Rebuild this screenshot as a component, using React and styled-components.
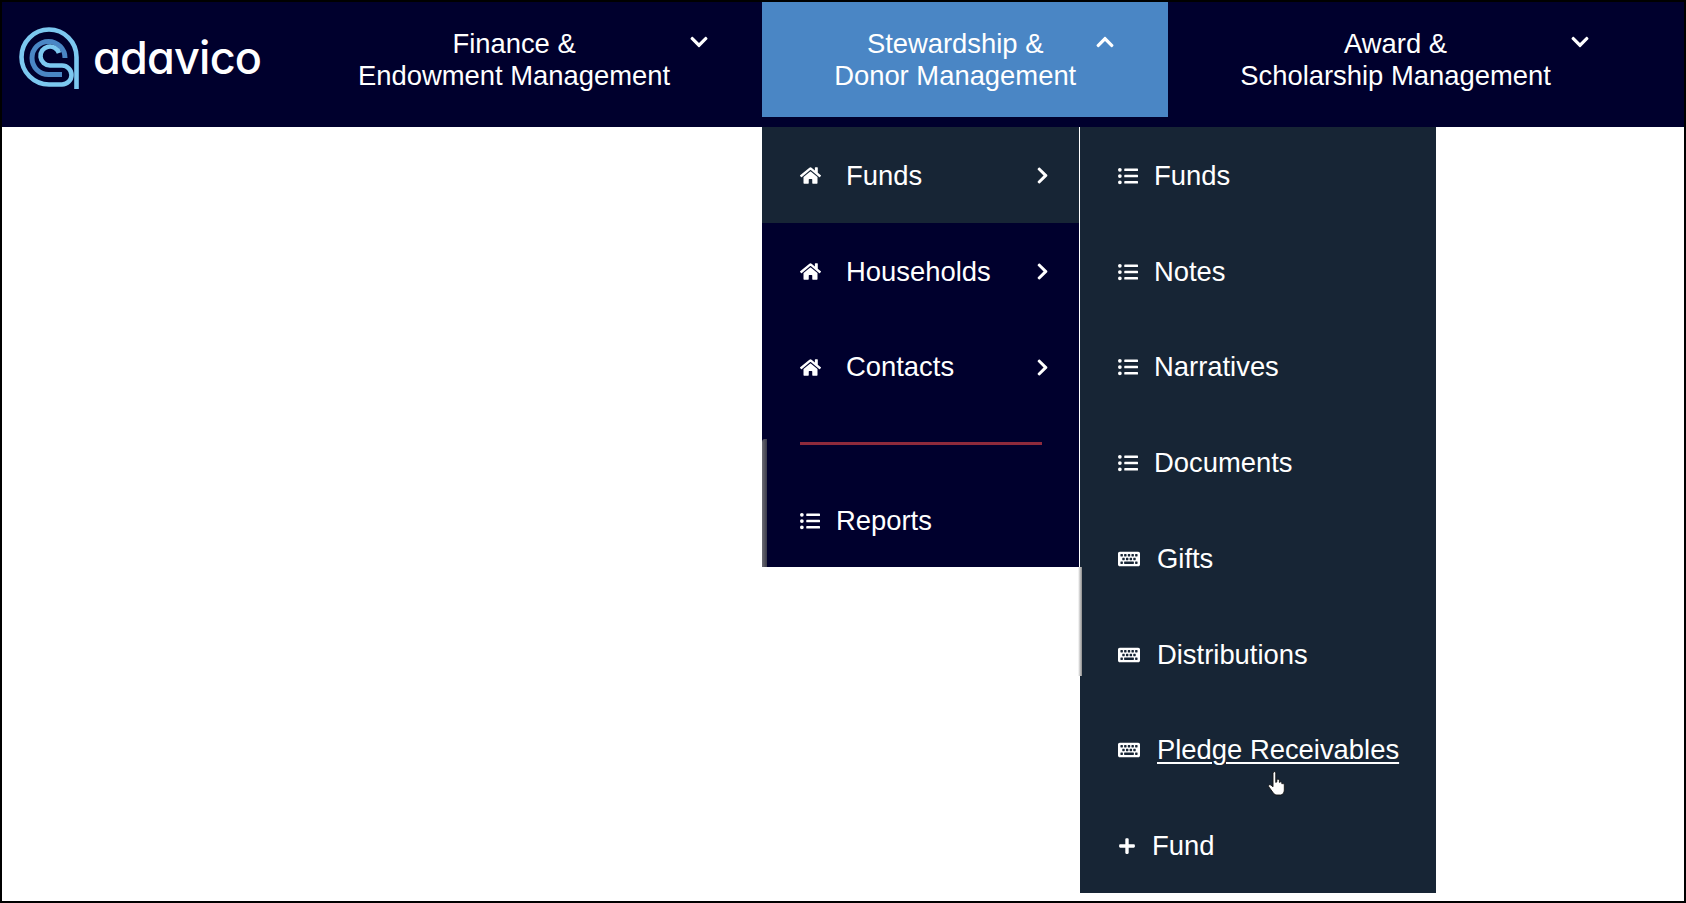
import React from "react";
import styled, { createGlobalStyle } from "styled-components";
import { FaHome, FaListUl, FaKeyboard, FaPlus, FaChevronRight, FaChevronDown, FaChevronUp } from "react-icons/fa";

const Global = createGlobalStyle`
  html, body { margin: 0; padding: 0; background: #fff; }
  * { box-sizing: border-box; }
`;

const Page = styled.div`
  position: relative;
  width: 1686px;
  height: 903px;
  border: 2px solid #000;
  background: #fff;
  font-family: "Liberation Sans", Arial, sans-serif;
  color: #fff;
  overflow: hidden;
`;

const Header = styled.header`
  display: flex;
  align-items: flex-start;
  height: 125px;
  background: #00002d;
`;

const Brand = styled.div`
  display: flex;
  align-items: center;
  gap: 12px;
  width: 284px;
  height: 115px;
  padding: 0 0 4px 15px;
`;

const Wordmark = styled.span`
  font-family: Inter, "Liberation Sans", sans-serif;
  font-feature-settings: "cv11";
  font-size: 45px;
  font-weight: 500;
  line-height: 1;
  letter-spacing: -0.8px;
`;

const NavItem = styled.div`
  display: flex;
  align-items: flex-start;
  height: 115px;
  padding: 26px 53px 0 72px;
  background: ${(p) => (p.$active ? "#4a86c5" : "transparent")};
`;

const NavLabel = styled.div`
  font-size: 27.4px;
  line-height: 32px;
  text-align: center;
  white-space: nowrap;
`;

const Caret = styled.span`
  display: flex;
  width: 20px;
  margin: 4px 0 0 19px;
  font-size: 20px;
  justify-content: center;
`;

const Dropdown = styled.div`
  position: absolute;
  top: 125px;
  left: 760px;
  display: flex;
  align-items: flex-start;
`;

const Primary = styled.div`
  position: relative;
  width: 317px;
  height: 440px;
  background: #00002d;
`;

const Secondary = styled.div`
  position: relative;
  width: 356px;
  height: 766px;
  margin-left: 1px;
  background: #172535;
`;

const Row = styled.div`
  display: flex;
  align-items: center;
  height: 95.75px;
  padding: 2px 27px 0 38px;
  font-size: 27.4px;
  background: ${(p) => (p.$active ? "#172535" : "transparent")};
`;

const RowIcon = styled.span`
  display: flex;
  flex: none;
  width: ${(p) => p.$w}px;
  margin-right: ${(p) => p.$gap}px;
  font-size: ${(p) => p.$size}px;
  justify-content: center;
`;

const RowLabel = styled.span`
  flex: 1;
  white-space: nowrap;
  text-decoration: ${(p) => (p.$hover ? "underline" : "none")};
  text-underline-offset: 3px;
  text-decoration-thickness: 2px;
`;

const More = styled.span`
  display: flex;
  font-size: 19px;
`;

const Divider = styled.hr`
  width: 242px;
  height: 3px;
  margin: 28px 0 0 38px;
  border: 0;
  background: #8e2a3c;
`;

const ReportsRow = styled(Row)`
  margin-top: 27px;
`;

const PrimaryShade = styled.div`
  position: absolute;
  left: 0;
  top: 312px;
  bottom: 0;
  width: 5px;
  border-radius: 3px 0 0 0;
  background: linear-gradient(90deg, #6c6c74, #3a3a48);
`;

const GapShade = styled.div`
  position: absolute;
  left: 1076px;
  top: 565px;
  width: 4px;
  height: 109px;
  background: linear-gradient(90deg, #ffffff, #8b8b8b);
`;

const Pointer = styled.svg`
  position: absolute;
  left: 1265px;
  top: 768px;
  width: 23px;
  height: 27px;
`;

const Logo = () => (
  <svg width="64" height="66" viewBox="17 24 64 66" fill="none" aria-hidden="true">
    <path d="M65 57A16.5 16.5 0 1 0 48.5 73.5H62" stroke="#4a86c5" strokeWidth="5" />
    <path
      d="M76.5 88V56A27.5 27.5 0 1 0 49 83.5H62A9.5 9.5 0 0 0 62 64.5H50A9.5 9.5 0 1 1 59 52"
      stroke="#7cc8f0"
      strokeWidth="4.6"
    />
  </svg>
);

const icons = {
  list: <RowIcon $w={20} $gap={16} $size={20}><FaListUl /></RowIcon>,
  keyboard: <RowIcon $w={22} $gap={17} $size={22}><FaKeyboard /></RowIcon>,
  plus: <RowIcon $w={18} $gap={16} $size={18}><FaPlus /></RowIcon>,
};

const navItems = [
  { top: "Finance &", bottom: "Endowment Management" },
  { top: "Stewardship &", bottom: "Donor Management", active: true },
  { top: "Award &", bottom: "Scholarship Management" },
];

const primaryRows = ["Funds", "Households", "Contacts"];

const secondaryRows = [
  ["list", "Funds"],
  ["list", "Notes"],
  ["list", "Narratives"],
  ["list", "Documents"],
  ["keyboard", "Gifts"],
  ["keyboard", "Distributions"],
  ["keyboard", "Pledge Receivables", true],
  ["plus", "Fund"],
];

export default function App() {
  return (
    <Page>
      <Global />
      <Header>
        <Brand>
          <Logo />
          <Wordmark>adavico</Wordmark>
        </Brand>
        {navItems.map((n) => (
          <NavItem key={n.top} $active={n.active}>
            <NavLabel>
              {n.top}
              <br />
              {n.bottom}
            </NavLabel>
            <Caret>{n.active ? <FaChevronUp /> : <FaChevronDown />}</Caret>
          </NavItem>
        ))}
      </Header>
      <Dropdown>
        <Primary>
          {primaryRows.map((label, i) => (
            <Row key={label} $active={i === 0}>
              <RowIcon $w={21} $gap={25} $size={21}><FaHome /></RowIcon>
              <RowLabel>{label}</RowLabel>
              <More><FaChevronRight /></More>
            </Row>
          ))}
          <Divider />
          <ReportsRow>
            {icons.list}
            <RowLabel>Reports</RowLabel>
          </ReportsRow>
          <PrimaryShade />
        </Primary>
        <Secondary>
          {secondaryRows.map(([icon, label, hover]) => (
            <Row key={label + icon}>
              {icons[icon]}
              <RowLabel $hover={hover}>{label}</RowLabel>
            </Row>
          ))}
        </Secondary>
      </Dropdown>
      <GapShade />
      <Pointer viewBox="0 0 21 24" aria-hidden="true">
        <path
          d="M6 1.5C7 .8 8 1.3 8 2.5V11l1-.5V8.5c1-.8 2-.5 2.3.5v2c.9-.8 2-.6 2.3.4v1c.9-.6 1.9-.3 2.2.6V18c0 2.5-1.5 4.5-3.5 4.5H9c-1.5 0-2.5-.8-3.5-2.2L1.6 15c-.8-1.4.6-2.6 1.9-1.6L5.5 15V2.5z"
          fill="#fff"
          stroke="#111"
          strokeWidth=".8"
        />
      </Pointer>
    </Page>
  );
}
